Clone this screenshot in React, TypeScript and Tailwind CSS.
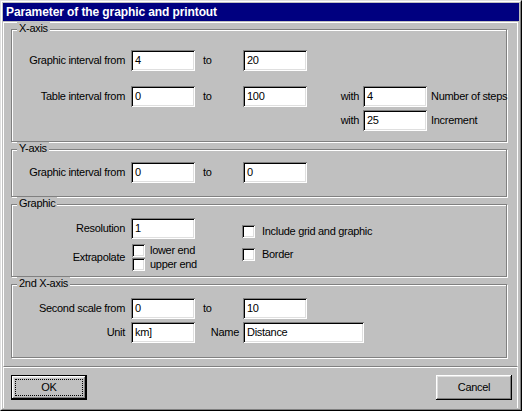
import type { ReactNode } from 'react';

const sunken =
  'shadow-[inset_1px_1px_0_#808080,inset_-1px_-1px_0_#ffffff,inset_2px_2px_0_#000000,inset_-2px_-2px_0_#dfdfdf]';
const raised =
  'shadow-[inset_-1px_-1px_0_#000000,inset_1px_1px_0_#ffffff,inset_-2px_-2px_0_#808080,inset_2px_2px_0_#dfdfdf]';

function Field({ value, w = 'w-[64px]' }: { value: string; w?: string }) {
  return (
    <div className={`${w} ${sunken} h-[21px] shrink-0 bg-white flex items-center pl-[4px] text-black`}>
      {value}
    </div>
  );
}

function Check() {
  return <div className={`${sunken} w-[13px] h-[13px] shrink-0 bg-white`} />;
}

function Label({ children }: { children: ReactNode }) {
  return <div className="w-[113px] mr-[6px] shrink-0 text-right whitespace-nowrap">{children}</div>;
}

function To() {
  return <div className="w-[48px] shrink-0 pl-[8px]">to</div>;
}

function Group({ title, className, children }: { title: string; className: string; children: ReactNode }) {
  return (
    <div
      className={`relative border border-[#808080] shadow-[inset_1px_1px_0_#ffffff,1px_1px_0_#ffffff] ${className}`}
    >
      <span className="absolute left-[5px] top-[-8px] px-[2px] bg-[#c0c0c0] leading-[13px]">{title}</span>
      {children}
    </div>
  );
}

export default function App() {
  return (
    <div className="w-[522px] h-[411px] bg-[#c0c0c0] border border-t-[#dfdfdf] border-l-[#dfdfdf] border-r-black border-b-black font-['Liberation_Sans',Arial,sans-serif] text-[11px] leading-[13px] tracking-[-0.3px] text-black">
      <div className="h-full border border-t-white border-l-white border-r-[#808080] border-b-[#808080] p-[1px] flex flex-col">
        {/* Title bar */}
        <div className="h-[18px] shrink-0 bg-[#000080] text-white font-bold text-[12px] leading-[18px] tracking-[-0.1px] pl-[3px] whitespace-nowrap">
          Parameter of the graphic and printout
        </div>

        {/* Groups */}
        <div className="mt-[1px] mr-[1px] h-[345px] border border-t-white border-l-white border-r-white border-b-[#808080] pt-[6px] pl-[7px] pr-[10px] flex flex-col gap-[7px]">
          <Group title="X-axis" className="h-[113px] pt-[20px]">
            <div className="flex items-center h-[21px]">
              <Label>Graphic interval from</Label>
              <Field value="4" />
              <To />
              <Field value="20" />
            </div>
            <div className="flex items-center h-[21px] mt-[15px]">
              <Label>Table interval from</Label>
              <Field value="0" />
              <To />
              <Field value="100" />
              <div className="w-[56px] shrink-0 text-right pr-[4px]">with</div>
              <Field value="4" />
              <div className="ml-[4px] whitespace-nowrap">Number of steps</div>
            </div>
            <div className="flex items-center h-[21px] mt-[3px]">
              <div className="w-[295px] shrink-0" />
              <div className="w-[56px] shrink-0 text-right pr-[4px]">with</div>
              <Field value="25" />
              <div className="ml-[4px] whitespace-nowrap">Increment</div>
            </div>
          </Group>

          <Group title="Y-axis" className="h-[48px] pt-[12px]">
            <div className="flex items-center h-[21px]">
              <Label>Graphic interval from</Label>
              <Field value="0" />
              <To />
              <Field value="0" />
            </div>
          </Group>

          <Group title="Graphic" className="h-[73px] flex">
            <div className="w-[230px] shrink-0 pt-[13px]">
              <div className="flex items-center h-[21px]">
                <Label>Resolution</Label>
                <Field value="1" />
              </div>
              <div className="flex items-center mt-[5px]">
                <Label>Extrapolate</Label>
                <div className="flex flex-col gap-[1px]">
                  <div className="flex items-center h-[13px]">
                    <div className="ml-[1px]">
                      <Check />
                    </div>
                    <span className="ml-[5px] whitespace-nowrap">lower end</span>
                  </div>
                  <div className="flex items-center h-[13px]">
                    <div className="ml-[1px]">
                      <Check />
                    </div>
                    <span className="ml-[5px] whitespace-nowrap">upper end</span>
                  </div>
                </div>
              </div>
            </div>
            <div className="pt-[20px] flex flex-col gap-[10px]">
              <div className="flex items-center h-[13px]">
                <Check />
                <span className="ml-[7px] whitespace-nowrap">Include grid and graphic</span>
              </div>
              <div className="flex items-center h-[13px]">
                <Check />
                <span className="ml-[7px] whitespace-nowrap">Border</span>
              </div>
            </div>
          </Group>

          <Group title="2nd X-axis" className="h-[74px] pt-[13px]">
            <div className="flex items-center h-[21px]">
              <Label>Second scale from</Label>
              <Field value="0" />
              <To />
              <Field value="10" />
            </div>
            <div className="flex items-center h-[21px] mt-[3px]">
              <Label>Unit</Label>
              <Field value="km]" />
              <div className="w-[48px] shrink-0 text-right pr-[4px]">Name</div>
              <Field value="Distance" w="w-[121px]" />
            </div>
          </Group>
        </div>

        {/* Buttons */}
        <div className="mr-[1px] flex-1 border-t border-l border-r border-t-white border-l-white border-r-white pt-[7px] pl-[7px] pr-[5px] flex justify-between items-start">
          <button className="relative w-[76px] h-[25px] border border-black bg-[#c0c0c0] p-0">
            <div className={`${raised} absolute inset-0`} />
            <div className="absolute inset-[3px] border border-dotted border-black" />
            <span className="relative">OK</span>
          </button>
          <button className={`${raised} w-[76px] h-[25px] bg-[#c0c0c0] p-0`}>Cancel</button>
        </div>
      </div>
    </div>
  );
}
